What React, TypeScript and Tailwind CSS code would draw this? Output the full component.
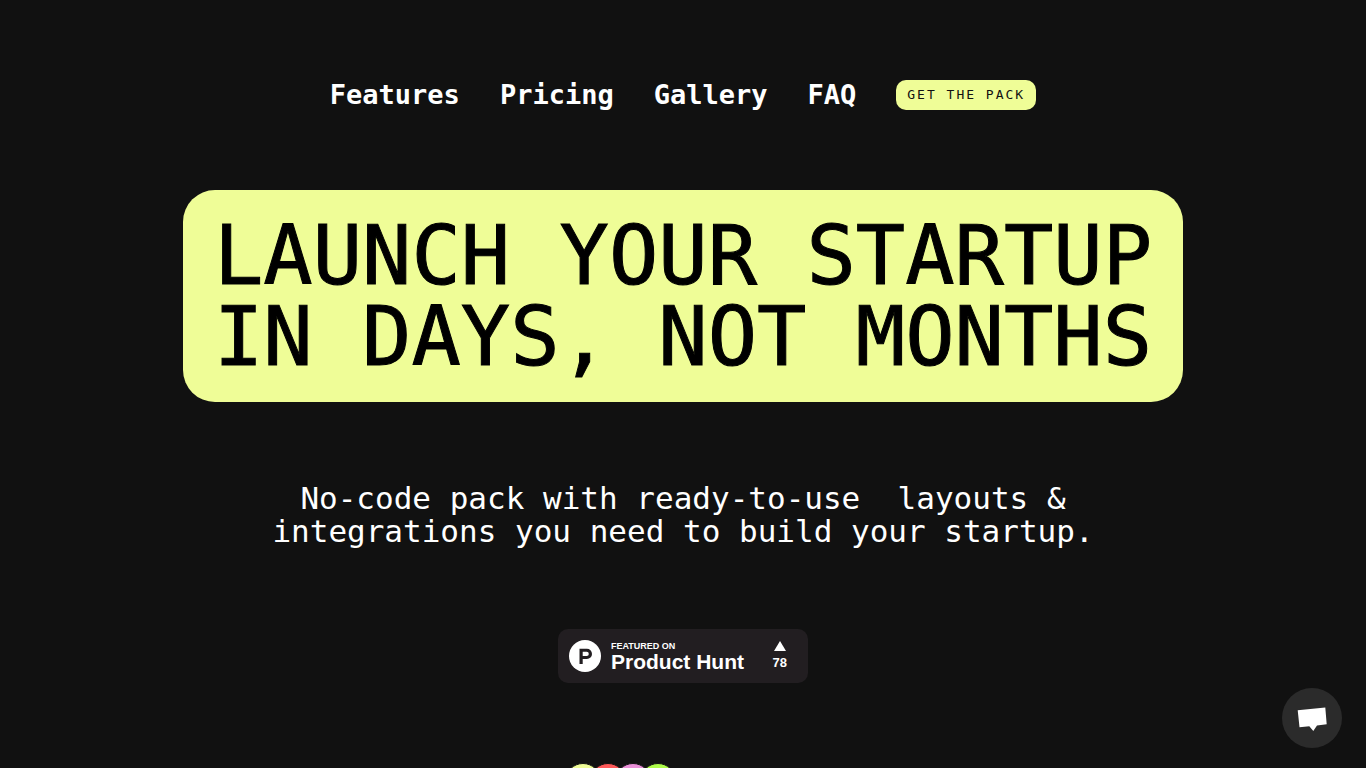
const navLinks = [
  { label: "Features", href: "#features" },
  { label: "Pricing", href: "#pricing" },
  { label: "Gallery", href: "#gallery" },
  { label: "FAQ", href: "#faq" },
];

const avatars = ["bg-[#effd97]", "bg-[#ff5a5a]", "bg-[#ea90d8]", "bg-[#aefc4a]"];

function Navbar() {
  return (
    <nav className="flex items-center justify-center gap-10">
      {navLinks.map((link) => (
        <a key={link.label} href={link.href} className="text-[27px] leading-8 font-bold text-white">
          {link.label}
        </a>
      ))}
      <button className="h-[30px] rounded-[10px] bg-[#effd97] px-[11px] text-[13px] tracking-[2px] text-[#111111]">
        GET THE PACK
      </button>
    </nav>
  );
}

function ProductHuntBadge() {
  return (
    <a
      href="#product-hunt"
      className="flex h-[54px] w-[250px] items-center rounded-[10px] bg-[#221e21] pr-[21px] pl-[11px] font-['Liberation_Sans',sans-serif] font-bold text-white"
    >
      <svg viewBox="0 0 32 32" className="h-8 w-8">
        <circle cx="16" cy="16" r="16" fill="#fff" />
        <path
          fillRule="evenodd"
          fill="#221e21"
          d="M10.500 8.800h7.400a5 5 0 0 1 0 10.200h-4.200v5h-3.200zM13.700 11.800v4.200h4a2.100 2.100 0 0 0 0-4.200z"
        />
      </svg>
      <div className="ml-[10px] flex flex-col">
        <span className="text-[9px] leading-3">FEATURED ON</span>
        <span className="text-[21px] leading-5">Product Hunt</span>
      </div>
      <div className="ml-auto flex flex-col items-center pt-1">
        <svg viewBox="0 0 12 10" className="h-[10px] w-3">
          <path d="M6 0l6 10H0z" fill="#fff" />
        </svg>
        <span className="text-[13px] leading-6">78</span>
      </div>
    </a>
  );
}

export default function App() {
  return (
    <div className="h-screen overflow-hidden bg-[#111111] font-['DejaVu_Sans_Mono',monospace]">
      <header className="pt-[79px]">
        <Navbar />
      </header>
      <main className="flex flex-col items-center">
        <h1 className="mt-[79px] rounded-[32px] bg-[#effd97] px-[31px] py-[25px] text-center text-[82px] leading-[81px] font-normal text-black [-webkit-text-stroke:1px_black]">
          LAUNCH YOUR STARTUP
          <br />
          IN DAYS, NOT MONTHS
        </h1>
        <p className="mt-20 text-center text-[31px] leading-[33px] whitespace-pre text-white">
          {"No-code pack with ready-to-use  layouts &\nintegrations you need to build your startup."}
        </p>
        <div className="mt-[81px]">
          <ProductHuntBadge />
        </div>
        <div className="mt-20 flex w-[236px] -space-x-[11px]">
          {avatars.map((color) => (
            <span key={color} className={`h-9 w-9 rounded-full border border-[#111111] ${color}`} />
          ))}
        </div>
      </main>
      <button
        aria-label="Open chat"
        className="fixed right-6 bottom-5 flex h-[60px] w-[60px] items-center justify-center rounded-full bg-[#2b2b2b]"
      >
        <svg viewBox="0 0 30 26" className="h-[26px] w-[30px]">
          <path d="M.7 5.300L28.300 2.500L29.700 19.300L20 20.500L16.300 26L12.300 21.300L2.500 22.300z" fill="#fff" />
        </svg>
      </button>
    </div>
  );
}
